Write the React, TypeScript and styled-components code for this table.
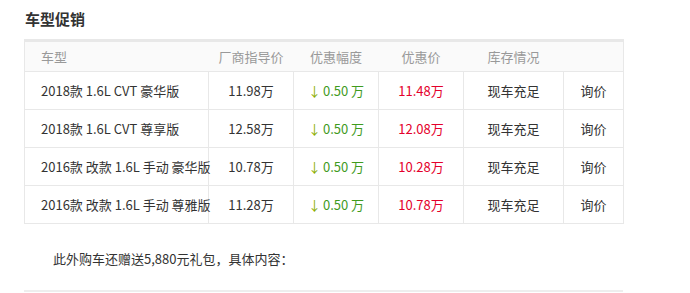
import React from 'react';
import styled, { createGlobalStyle } from 'styled-components';

const GlobalStyle = createGlobalStyle`
  body {
    margin: 0;
    background: #fff;
    font-family: "Noto Sans CJK SC", "Noto Sans", sans-serif;
    color: #333;
  }
`;

const Section = styled.section`
  width: 599px;
  padding: 9px 0 0 24px;
`;

const Title = styled.h3`
  margin: 0 0 10px 1px;
  font-size: 15px;
  line-height: 20px;
  font-weight: bold;
  color: #333;
`;

const Table = styled.table`
  width: 599px;
  border-collapse: collapse;
  table-layout: fixed;
  font-size: 13px;
  border-top: 3px solid #e8e8e8;
`;

const HeadCell = styled.th<{ $left?: boolean }>`
  height: 29px;
  padding: 0;
  padding-left: ${(p) => (p.$left ? '16px' : '0')};
  text-align: ${(p) => (p.$left ? 'left' : 'center')};
  font-weight: normal;
  color: #999;
  background: #fafafa;
  border-bottom: 1px solid #e8e8e8;

  &:first-child {
    border-left: 1px solid #e8e8e8;
  }
  &:last-child {
    border-right: 1px solid #e8e8e8;
  }
`;

const Cell = styled.td<{ $left?: boolean; $tone?: 'red' | 'green' }>`
  height: 37px;
  padding: 0;
  padding-left: ${(p) => (p.$left ? '16px' : '0')};
  text-align: ${(p) => (p.$left ? 'left' : 'center')};
  color: ${(p) => (p.$tone === 'red' ? '#e4002b' : p.$tone === 'green' ? '#3f9b1e' : '#333')};
  border: 1px solid #e8e8e8;
  white-space: nowrap;
`;

const Arrow = styled.span`
  color: #8cae00;
  margin-right: 2px;
`;

const Note = styled.p`
  margin: 0;
  padding: 26px 0 22px 29px;
  font-size: 13px;
  line-height: 18px;
  border-bottom: 2px solid #eee;
`;

const rows = [
  { name: '2018款 1.6L CVT 豪华版', price: '11.98万', sale: '11.48万' },
  { name: '2018款 1.6L CVT 尊享版', price: '12.58万', sale: '12.08万' },
  { name: '2016款 改款 1.6L 手动 豪华版', price: '10.78万', sale: '10.28万' },
  { name: '2016款 改款 1.6L 手动 尊雅版', price: '11.28万', sale: '10.78万' },
];

export default function App() {
  return (
    <>
      <GlobalStyle />
      <Section>
        <Title>车型促销</Title>
        <Table>
          <colgroup>
            <col style={{ width: 184 }} />
            <col style={{ width: 85 }} />
            <col style={{ width: 85 }} />
            <col style={{ width: 85 }} />
            <col style={{ width: 100 }} />
            <col style={{ width: 60 }} />
          </colgroup>
          <thead>
            <tr>
              <HeadCell $left>车型</HeadCell>
              <HeadCell>厂商指导价</HeadCell>
              <HeadCell>优惠幅度</HeadCell>
              <HeadCell>优惠价</HeadCell>
              <HeadCell>库存情况</HeadCell>
              <HeadCell />
            </tr>
          </thead>
          <tbody>
            {rows.map((r) => (
              <tr key={r.name}>
                <Cell $left>{r.name}</Cell>
                <Cell>{r.price}</Cell>
                <Cell $tone="green">
                  <Arrow>↓</Arrow>0.50 万
                </Cell>
                <Cell $tone="red">{r.sale}</Cell>
                <Cell>现车充足</Cell>
                <Cell>询价</Cell>
              </tr>
            ))}
          </tbody>
        </Table>
        <Note>此外购车还赠送5,880元礼包，具体内容：</Note>
      </Section>
    </>
  );
}
